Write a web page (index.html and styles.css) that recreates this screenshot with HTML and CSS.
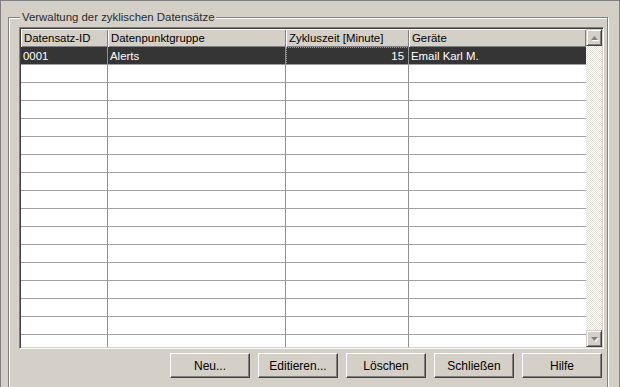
FILE: index.html
```html
<!DOCTYPE html>
<html lang="de">
<head>
    <meta charset="UTF-8">
    <title>Verwaltung der zyklischen Datensätze</title>
    <link rel="stylesheet" href="styles.css">
</head>
<body>
    <div class="window">
        <fieldset class="group">
            <legend>Verwaltung der zyklischen Datensätze</legend>
            <div class="grid-frame">
                <div class="grid">
                    <table class="records">
                        <colgroup>
                            <col class="col-id">
                            <col class="col-group">
                            <col class="col-cycle">
                            <col class="col-device">
                        </colgroup>
                        <thead>
                            <tr>
                                <th>Datensatz-ID</th>
                                <th>Datenpunktgruppe</th>
                                <th>Zykluszeit [Minute]</th>
                                <th>Geräte</th>
                            </tr>
                        </thead>
                        <tbody id="rows">
                            <tr class="selected">
                                <td>0001</td>
                                <td>Alerts</td>
                                <td class="num focus">15</td>
                                <td>Email Karl M.</td>
                            </tr>
                        </tbody>
                    </table>
                </div>
                <div class="scrollbar">
                    <div class="sb-btn">
                        <svg width="7" height="4" viewBox="0 0 7 4"><polygon points="3.5,0 7,4 0,4" fill="#808080"/></svg>
                    </div>
                    <div class="sb-track"></div>
                    <div class="sb-btn">
                        <svg width="7" height="4" viewBox="0 0 7 4"><polygon points="0,0 7,0 3.5,4" fill="#808080"/></svg>
                    </div>
                </div>
            </div>
            <div class="actions">
                <button>Neu...</button>
                <button>Editieren...</button>
                <button>Löschen</button>
                <button>Schließen</button>
                <button>Hilfe</button>
            </div>
        </fieldset>
    </div>

    <script>
        // fill the grid with empty rows below the single record
        const rows = document.getElementById('rows');
        for (let i = 0; i < 16; i++) {
            const tr = document.createElement('tr');
            tr.innerHTML = '<td></td><td></td><td></td><td></td>';
            rows.appendChild(tr);
        }
    </script>
</body>
</html>
```

FILE: styles.css
```css
* {
    box-sizing: border-box;
}
body {
    margin: 0;
    font-family: "Liberation Sans", Arial, sans-serif;
    font-size: 11.4px;
    color: #000;
}
.window {
    width: 620px;
    height: 387px;
    background: #d4d0c8;
    border: 1px solid #808080;
    border-bottom: none;
    padding-top: 9px;
    overflow: hidden;
}
.group {
    margin: 0 11px 0 7px;
    padding: 3px 2px 0 10px;
    height: 420px;
    border: 1px solid #808080;
    box-shadow: 1px 1px 0 #fff, inset 1px 1px 0 #fff;
}
.group legend {
    margin-left: 1px;
    padding: 0 2px;
    line-height: 14px;
    background: #d4d0c8;
    color: #2a2a2a;
}
.grid-frame {
    display: flex;
    width: 585px;
    height: 322px;
    padding: 1px;
    border: 1px solid;
    border-color: #808080 #fff #fff #808080;
    box-shadow: inset 1px 1px 0 #404040, inset -1px -1px 0 #d4d0c8;
}
.grid {
    width: 565px;
    background: #fff;
    overflow: hidden;
}
.records {
    width: 565px;
    table-layout: fixed;
    border-collapse: separate;
    border-spacing: 0;
}
.col-id { width: 87px; }
.col-group { width: 178px; }
.col-cycle { width: 123px; }
.col-device { width: 177px; }
.records th {
    height: 18px;
    padding: 0 3px;
    text-align: left;
    font-weight: normal;
    background: #d4d0c8;
    box-shadow: inset 1px 1px 0 #fff, inset -1px -1px 0 #808080;
    white-space: nowrap;
}
.records td {
    height: 18px;
    padding: 0 2px;
    line-height: 16px;
    border-right: 1px solid #909090;
    border-bottom: 1px solid #a0a0a0;
    white-space: nowrap;
    overflow: hidden;
}
.records td:last-child {
    border-right: none;
}
.records td.num {
    text-align: right;
    padding-right: 4px;
}
.records tr.selected td {
    background: #353535;
    color: #fff;
}
.records td.focus {
    outline: 1px dotted #9a9a9a;
    outline-offset: -1px;
}
.scrollbar {
    width: 16px;
    display: flex;
    flex-direction: column;
}
.sb-btn {
    height: 17px;
    display: flex;
    align-items: center;
    justify-content: center;
    background: #d4d0c8;
    border: 1px solid;
    border-color: #d4d0c8 #404040 #404040 #d4d0c8;
    box-shadow: inset 1px 1px 0 #fff, inset -1px -1px 0 #808080;
}
.sb-btn svg {
    filter: drop-shadow(1px 1px 0 #fff);
}
.sb-track {
    flex: 1;
    background: repeating-conic-gradient(#fff 0 25%, #e2dfd9 0 50%);
    background-size: 2px 2px;
}
.actions {
    display: flex;
    justify-content: flex-end;
    gap: 8px;
    margin-top: 4px;
    margin-right: 3px;
}
.actions button {
    width: 80px;
    height: 25px;
    padding: 0;
    font-family: inherit;
    font-size: 12px;
    color: #000;
    background: #d4d0c8;
    border: 1px solid;
    border-color: #fff #404040 #404040 #fff;
    box-shadow: inset -1px -1px 0 #808080;
}
```
